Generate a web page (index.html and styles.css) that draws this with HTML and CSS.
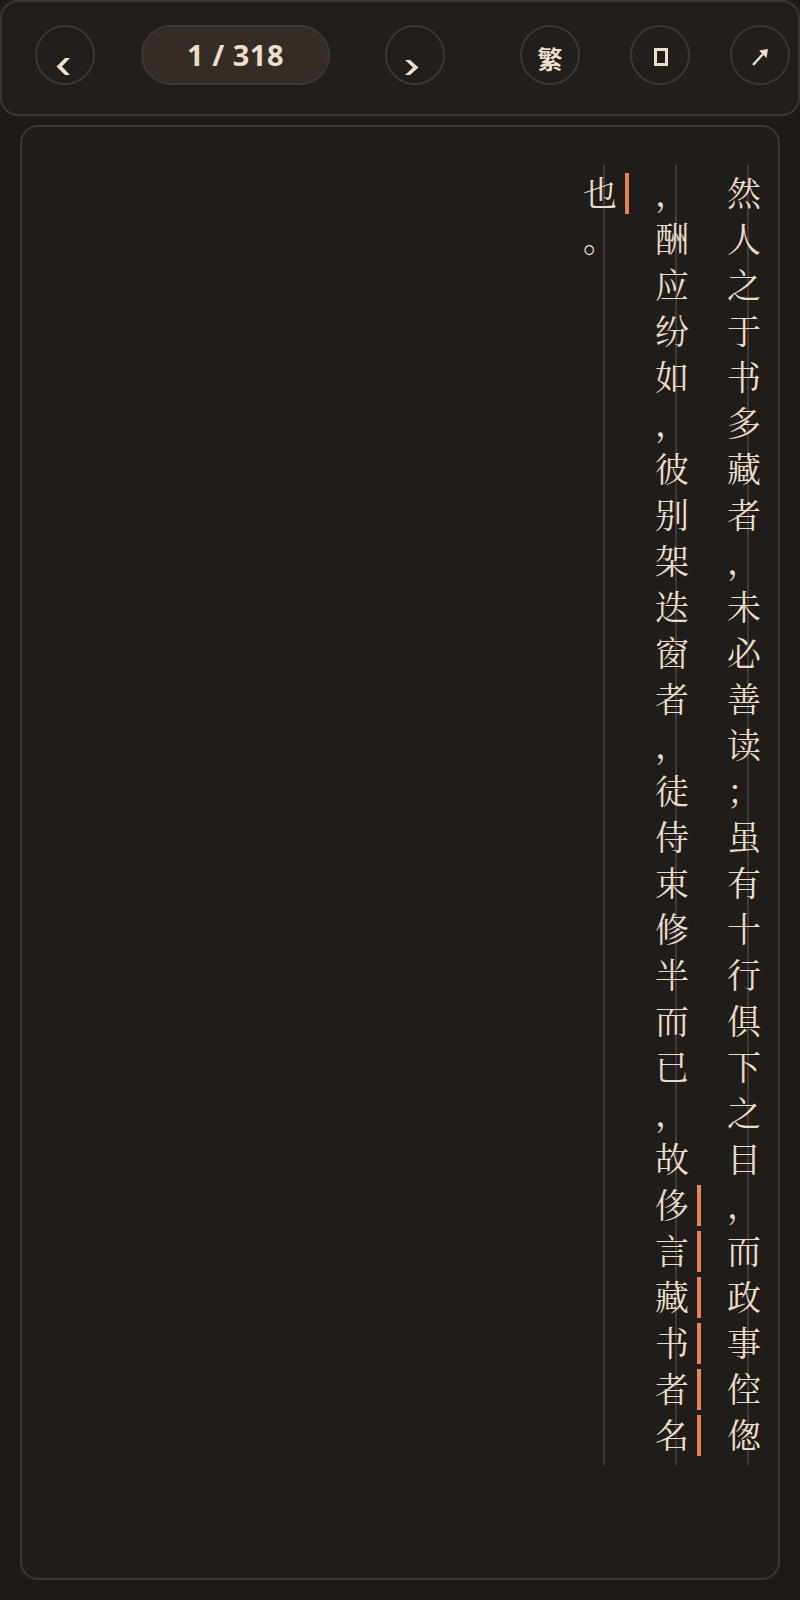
FILE: index.html
```html
<!DOCTYPE html>
<html lang="zh-CN">
<head>
<meta charset="utf-8">
<title>Reader</title>
<link rel="stylesheet" href="styles.css">
</head>
<body>
<header class="topbar">
  <button class="circ prev" aria-label="上一页">
    <svg class="ico" viewBox="0 0 56 56"><polygon class="fillc" points="28,31 33,31 25,39.5 33,48 28,48 19.5,39.5" /></svg>
  </button>
  <div class="pager">1 / 318</div>
  <button class="circ next" aria-label="下一页">
    <svg class="ico" viewBox="0 0 56 56"><polygon class="fillc" points="18,33 23,33 31.5,40.5 23,48 18,48 26,40.5" /></svg>
  </button>
  <button class="circ trad">繁</button>
  <button class="circ box"><span class="tofu"></span></button>
  <button class="circ share">
    <svg class="ico" viewBox="0 0 56 56"><line x1="21" y1="38" x2="31" y2="27" class="thin"/><polygon points="27,23.5 36,22 34.5,31" class="fillc"/></svg>
  </button>
</header>

<main class="page">
  <div class="col">
    <span class="ch">然</span><span class="ch">人</span><span class="ch">之</span><span class="ch">于</span><span class="ch">书</span><span class="ch">多</span><span class="ch">藏</span><span class="ch">者</span><span class="ch">，</span><span class="ch">未</span><span class="ch">必</span><span class="ch">善</span><span class="ch">读</span><span class="ch">；</span><span class="ch">虽</span><span class="ch">有</span><span class="ch">十</span><span class="ch">行</span><span class="ch">俱</span><span class="ch">下</span><span class="ch">之</span><span class="ch">目</span><span class="ch">，</span><span class="ch">而</span><span class="ch">政</span><span class="ch">事</span><span class="ch">倥</span><span class="ch">偬</span>
  </div>
  <div class="col">
    <span class="ch">，</span><span class="ch">酬</span><span class="ch">应</span><span class="ch">纷</span><span class="ch">如</span><span class="ch">，</span><span class="ch">彼</span><span class="ch">别</span><span class="ch">架</span><span class="ch">迭</span><span class="ch">窗</span><span class="ch">者</span><span class="ch">，</span><span class="ch">徒</span><span class="ch">侍</span><span class="ch">束</span><span class="ch">修</span><span class="ch">半</span><span class="ch">而</span><span class="ch">已</span><span class="ch">，</span><span class="ch">故</span><span class="ch mk">侈</span><span class="ch mk">言</span><span class="ch mk">藏</span><span class="ch mk">书</span><span class="ch mk">者</span><span class="ch mk">名</span>
  </div>
  <div class="col">
    <span class="ch mk">也</span><span class="ch">。</span>
  </div>
</main>
</body>
</html>
```

FILE: styles.css
```css
html, body {
  margin: 0;
  padding: 0;
}

body {
  width: 800px;
  height: 1600px;
  background: #1e1a17;
  font-family: "Noto Sans", "Noto Sans CJK SC", sans-serif;
  overflow: hidden;
}

.topbar {
  box-sizing: border-box;
  height: 116px;
  border: 2px solid #3c3531;
  border-radius: 18px;
  background: #221e1b;
  display: flex;
  align-items: flex-start;
  padding: 23px 0 0 33px;
}

.circ {
  box-sizing: border-box;
  width: 60px;
  height: 60px;
  flex: 0 0 60px;
  border: 2px solid #3d3733;
  border-radius: 50%;
  background: transparent;
  padding: 0;
  margin: 0;
  display: flex;
  align-items: center;
  justify-content: center;
  color: #ecdfcc;
  font-family: "Noto Sans CJK SC", "Noto Sans", sans-serif;
}

.ico {
  width: 56px;
  height: 56px;
  display: block;
}

.ico .fillc {
  fill: #ecdfcc;
}

.ico .thin {
  stroke: #ecdfcc;
  stroke-width: 2.4;
}

.pager {
  box-sizing: border-box;
  width: 189px;
  height: 60px;
  margin-left: 46px;
  border: 2px solid #3e3632;
  border-radius: 30px;
  background: #342c27;
  color: #ecdfcc;
  font-family: "Noto Sans", "Open Sans", sans-serif;
  font-weight: 700;
  font-size: 29px;
  line-height: 56px;
  text-align: center;
  letter-spacing: 0.5px;
}

.next {
  margin-left: 55px;
}

.trad {
  margin-left: 75px;
  font-size: 25px;
  font-weight: 700;
  padding-top: 5px;
}

.box {
  margin-left: 50px;
}

.tofu {
  box-sizing: border-box;
  width: 14px;
  height: 18px;
  border: 3px solid #ecdfcc;
  margin: 4px 0 0 2px;
}

.share {
  margin-left: 40px;
}

.page {
  box-sizing: border-box;
  height: 1455px;
  margin: 9px 20px 0;
  border: 2px solid #3c3531;
  border-radius: 18px;
  background: #201c19;
  padding-top: 38px;
  display: flex;
  flex-direction: row-reverse;
  align-items: flex-start;
}

.col {
  box-sizing: border-box;
  width: 72px;
  height: 1300px;
  padding-top: 4px;
  display: flex;
  flex-direction: column;
  background: linear-gradient(#433a35, #433a35) no-repeat 41px 0 / 2px 100%;
}

.ch {
  display: block;
  box-sizing: border-box;
  height: 46px;
  line-height: 46px;
  padding-left: 4px;
  font-size: 34px;
  text-align: center;
  color: #e8ddcc;
  font-family: "AR PL UKai CN", "AR PL UKai", "KaiTi", "STKaiti", "Noto Serif CJK SC", "Noto Sans CJK SC", serif;
}

.mk {
  background: linear-gradient(#e8845a, #e8845a) no-repeat 63px 4px / 4px 41px;
}
```
